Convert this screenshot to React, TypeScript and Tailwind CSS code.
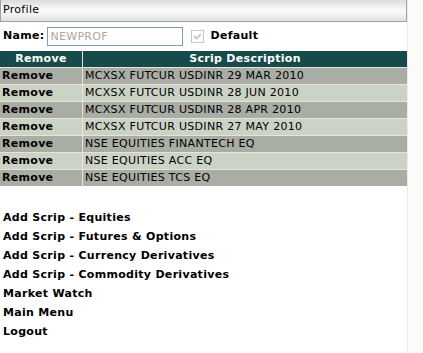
const rows = [
  'MCXSX FUTCUR USDINR 29 MAR 2010',
  'MCXSX FUTCUR USDINR 28 JUN 2010',
  'MCXSX FUTCUR USDINR 28 APR 2010',
  'MCXSX FUTCUR USDINR 27 MAY 2010',
  'NSE EQUITIES FINANTECH EQ',
  'NSE EQUITIES ACC EQ',
  'NSE EQUITIES TCS EQ',
]

const links = [
  'Add Scrip - Equities',
  'Add Scrip - Futures & Options',
  'Add Scrip - Currency Derivatives',
  'Add Scrip - Commodity Derivatives',
  'Market Watch',
  'Main Menu',
  'Logout',
]

const App = () => {
  return (
    <div className="min-h-screen bg-[#fbfbf9] font-['DejaVu_Sans',Verdana,sans-serif] text-[11px] tracking-[0.3px] text-black">
      <div className="min-h-screen w-[408px] border-r border-[#ebebeb] bg-white">
        {/* Title bar */}
        <div className="flex h-[22px] w-[407px] items-center border-x border-b border-[#a3a3a3] bg-gradient-to-b from-[#dcdcdc] via-[#fbfbfb] to-[#e2e2e2] px-[2px] text-[11px]">
          Profile
        </div>

        {/* Name row */}
        <div className="flex h-[25px] items-center pl-[3px] pt-[4px]">
          <span className="font-bold">Name:</span>
          <input
            disabled
            value="NEWPROF"
            readOnly
            className="ml-[3px] h-[19px] w-[136px] border border-[#7f9db9] bg-white px-[2px] font-['DejaVu_Sans',Verdana,sans-serif] text-[11px] tracking-[0.3px] text-[#aca899]"
          />
          <span className="ml-[8px] flex h-[13px] w-[13px] items-center justify-center border border-[#cac8bb] bg-white">
            <svg width="9" height="9" viewBox="0 0 9 9">
              <path d="M1 4 L3.5 6.5 L8 2" fill="none" stroke="#c4c2b6" strokeWidth="1.6" />
            </svg>
          </span>
          <span className="ml-[6px] font-bold">Default</span>
        </div>

        {/* Table */}
        <div className="mt-[4px] grid w-[407px] grid-cols-[82px_1fr] gap-px bg-[#e8e4d2]">
          <div className="flex h-[16px] items-center justify-center bg-[#164a4b] font-bold text-white">Remove</div>
          <div className="flex h-[16px] items-center justify-center bg-[#164a4b] font-bold text-white">Scrip Description</div>
          {rows.map((r, i) => {
            const bg = i % 2 === 0 ? 'bg-[#a9ada5]' : 'bg-[#cbd3c6]'
            return [
              <div key={'a' + i} className={`flex h-[16px] items-center pl-[2px] font-bold ${bg}`}>Remove</div>,
              <div key={'b' + i} className={`flex h-[16px] items-center pl-[2px] ${bg}`}>{r}</div>,
            ]
          })}
        </div>

        {/* Links */}
        <div className="mt-[22px] flex flex-col pl-[3px]">
          {links.map((l) => (
            <a key={l} href="#" className="h-[19px] leading-[19px] font-bold text-black">
              {l}
            </a>
          ))}
        </div>
      </div>
    </div>
  )
}

export default App
